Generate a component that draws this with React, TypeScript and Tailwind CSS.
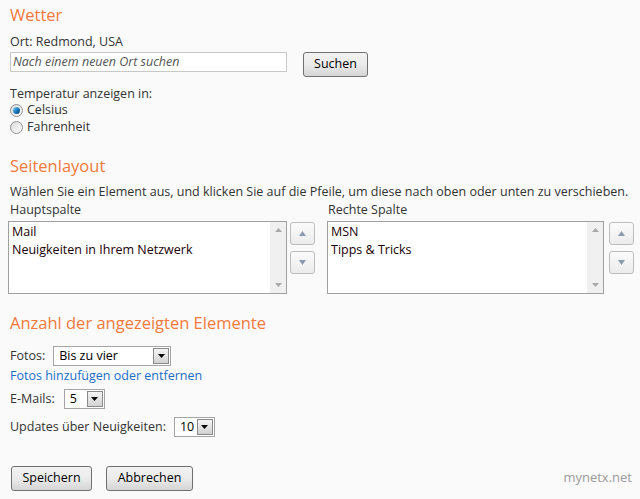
import React from "react"

const font = { fontFamily: '"Open Sans", "Noto Sans", sans-serif' }

function Heading({ children }: { children: React.ReactNode }) {
    return <h2 className="text-[16.5px] leading-[22px] text-[#f4793b]">{children}</h2>
}

function WinButton({ children, className = "" }: { children: React.ReactNode; className?: string }) {
    return (
        <button
            className={`h-[25px] rounded-[3px] border border-[#707070] bg-gradient-to-b from-[#f2f2f2] via-[#ebebeb] to-[#d5d5d5] text-[12.5px] text-black ${className}`}
        >
            {children}
        </button>
    )
}

function Radio({ checked, label }: { checked?: boolean; label: string }) {
    return (
        <label className="flex h-[17px] items-center gap-[4px]">
            <span className="flex h-[13px] w-[13px] items-center justify-center rounded-full border border-[#8e8f8f] bg-gradient-to-br from-[#dcdcdc] to-[#fbfbfb]">
                {checked && (
                    <span className="h-[7px] w-[7px] rounded-full bg-gradient-to-br from-[#7fd0f6] via-[#1a7fc0] to-[#0b3e6e]" />
                )}
            </span>
            <span>{label}</span>
        </label>
    )
}

function ListBox({ items, width }: { items: string[]; width: string }) {
    return (
        <div className={`flex h-[73px] border border-[#a0a0a0] bg-white ${width}`}>
            <div className="flex-1 px-[3px] pt-[1px] leading-[18px] text-[#1a0008]">
                {items.map((it) => (
                    <div key={it}>{it}</div>
                ))}
            </div>
            <div className="flex w-[16px] flex-col items-center justify-between bg-[#f0f0f0] py-[6px]">
                <svg width="7" height="4" viewBox="0 0 7 4">
                    <path d="M0 4 L3.5 0 L7 4 Z" fill="#a8a8a8" />
                </svg>
                <svg width="7" height="4" viewBox="0 0 7 4">
                    <path d="M0 0 L3.5 4 L7 0 Z" fill="#a8a8a8" />
                </svg>
            </div>
        </div>
    )
}

function ArrowButtons() {
    return (
        <div className="flex flex-col gap-[6px] pt-[1px]">
            <div className="flex h-[23px] w-[25px] items-center justify-center rounded-[3px] border border-[#bcbcbc] bg-gradient-to-b from-[#fbfbfb] to-[#ececec]">
                <svg width="7" height="5" viewBox="0 0 7 5">
                    <path d="M0 5 L3.5 0 L7 5 Z" fill="#8a9bb0" />
                </svg>
            </div>
            <div className="flex h-[23px] w-[25px] items-center justify-center rounded-[3px] border border-[#bcbcbc] bg-gradient-to-b from-[#fbfbfb] to-[#ececec]">
                <svg width="7" height="5" viewBox="0 0 7 5">
                    <path d="M0 0 L3.5 5 L7 0 Z" fill="#8a9bb0" />
                </svg>
            </div>
        </div>
    )
}

function Select({ value, width }: { value: string; width: string }) {
    return (
        <div className={`flex h-[20px] items-stretch border border-[#a5a5a5] bg-white p-[1px] ${width}`}>
            <span className="flex-1 pl-[4px] leading-[16px] text-black">{value}</span>
            <span className="flex w-[16px] items-center justify-center border border-[#8a8a8a] bg-gradient-to-b from-[#f4f4f4] to-[#d2d2d2]">
                <svg width="7" height="4" viewBox="0 0 7 4">
                    <path d="M0 0 L3.5 4 L7 0 Z" fill="#000" />
                </svg>
            </span>
        </div>
    )
}

export default function App() {
    return (
        <div className="relative h-[499px] w-[640px] overflow-hidden bg-[#fafafa] text-[12.5px] text-[#333]" style={font}>
            <div className="px-[10px] pt-[4px]">
                <Heading>Wetter</Heading>
                <div className="mt-[7px] leading-[17px]">Ort: Redmond, USA</div>
                <div className="mt-[2px] flex items-start gap-[16px]">
                    <div className="flex h-[20px] w-[277px] items-center border border-[#c8c8c8] bg-white px-[2px] italic text-[#555]">
                        Nach einem neuen Ort suchen
                    </div>
                    <WinButton className="w-[65px]">Suchen</WinButton>
                </div>
                <div className="mt-[8px] leading-[17px]">Temperatur anzeigen in:</div>
                <Radio checked label="Celsius" />
                <Radio label="Fahrenheit" />

                <div className="mt-[19px]">
                    <Heading>Seitenlayout</Heading>
                </div>
                <div className="mt-[6px] leading-[17px]">
                    Wählen Sie ein Element aus, und klicken Sie auf die Pfeile, um diese nach oben oder unten zu verschieben.
                </div>
                <div className="-ml-[2px] flex gap-[12px]">
                    <div>
                        <div className="ml-[2px] leading-[19px]">Hauptspalte</div>
                        <div className="mt-[2px] flex gap-[3px]">
                            <ListBox items={["Mail", "Neuigkeiten in Ihrem Netzwerk"]} width="w-[279px]" />
                            <ArrowButtons />
                        </div>
                    </div>
                    <div>
                        <div className="ml-[1px] leading-[19px]">Rechte Spalte</div>
                        <div className="mt-[2px] flex gap-[5px]">
                            <ListBox items={["MSN", "Tipps & Tricks"]} width="w-[277px]" />
                            <ArrowButtons />
                        </div>
                    </div>
                </div>

                <div className="mt-[18px]">
                    <Heading>Anzahl der angezeigten Elemente</Heading>
                </div>
                <div className="mt-[12px] flex items-center gap-[8px]">
                    <span>Fotos:</span>
                    <Select value="Bis zu vier" width="w-[118px]" />
                </div>
                <div className="leading-[19px] text-[#1a6ec8]">Fotos hinzufügen oder entfernen</div>
                <div className="mt-[4px] flex items-center gap-[9px]">
                    <span>E-Mails:</span>
                    <Select value="5" width="w-[41px]" />
                </div>
                <div className="mt-[8px] flex items-center gap-[8px]">
                    <span>Updates über Neuigkeiten:</span>
                    <Select value="10" width="w-[41px]" />
                </div>
                <div className="mt-[29px] flex gap-[14px] pl-[1px]">
                    <WinButton className="w-[81px]">Speichern</WinButton>
                    <WinButton className="w-[87px]">Abbrechen</WinButton>
                </div>
            </div>
            <div className="absolute bottom-[12px] right-[8px] text-[13px] text-[#9a9a9a]">mynetx.net</div>
        </div>
    )
}
